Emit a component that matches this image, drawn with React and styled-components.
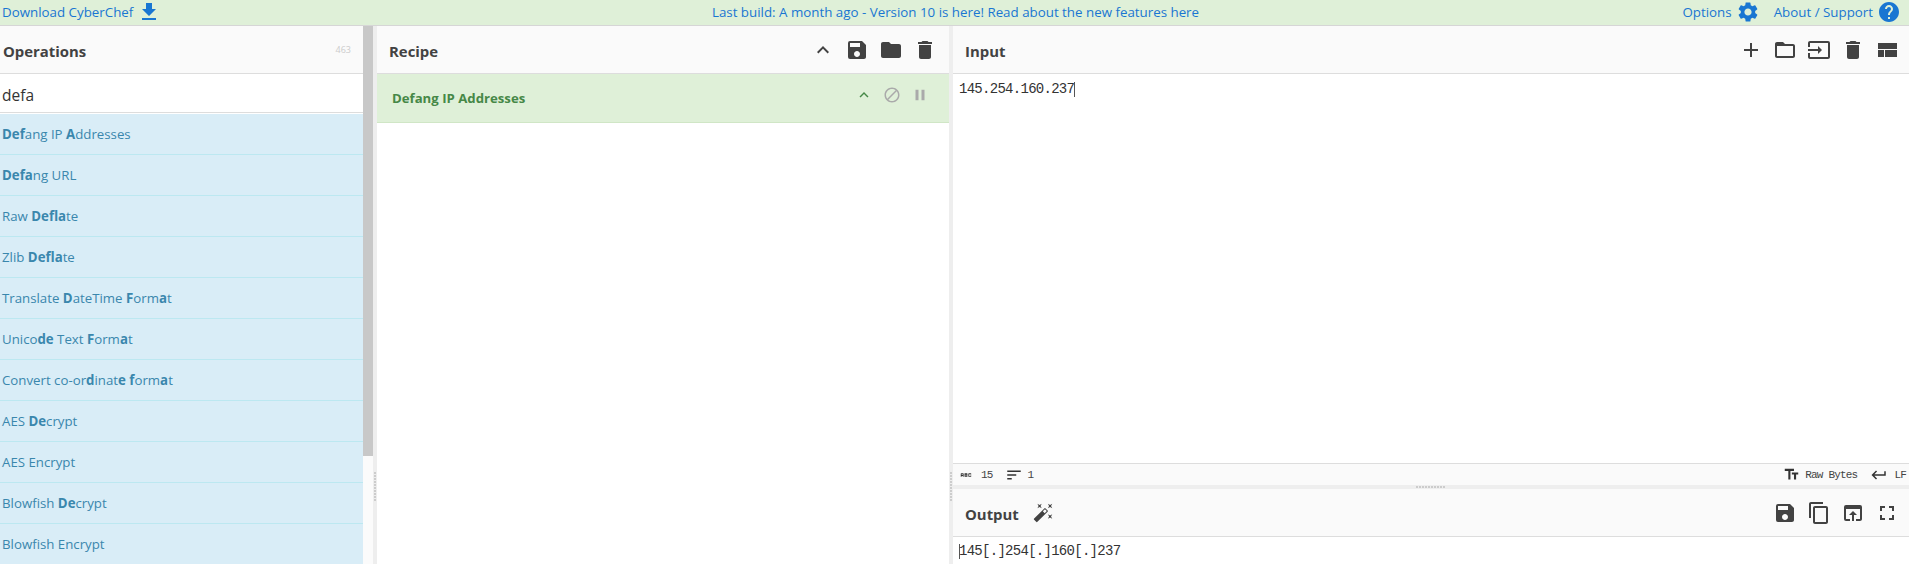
import React from 'react';
import styled, { createGlobalStyle } from 'styled-components';
import {
  MdFileDownload, MdSettings, MdHelp, MdKeyboardArrowUp, MdSave, MdFolder, MdDelete,
  MdAdd, MdFolderOpen, MdInput, MdContentCopy, MdOpenInBrowser,
  MdFullscreen, MdAutoFixHigh, MdBlock, MdPause, MdKeyboardReturn, MdTextFields, MdSort, MdAbc,
} from 'react-icons/md';

const sans = '"Open Sans", "Noto Sans", sans-serif';
const mono = '"Liberation Mono", monospace';

const GlobalStyle = createGlobalStyle`
  html, body { margin: 0; height: 100%; overflow: hidden; background: #fff; }
  * { box-sizing: border-box; }
`;

const Page = styled.div`
  height: 100vh;
  display: flex;
  flex-direction: column;
  font-family: ${sans};
  color: #333;
`;

const Banner = styled.div`
  height: 26px;
  flex: none;
  display: grid;
  grid-template-columns: 1fr auto 1fr;
  align-items: center;
  padding: 0 0 1px 2px;
  background: #dff0d8;
  border-bottom: 1px solid #d6d6d6;
  font-size: 13.33px;
  color: #1976d2;
`;

const BannerLink = styled.span`
  display: inline-flex;
  align-items: center;
  gap: 4px;
  svg { font-size: 24px; display: block; }
`;

const BannerRight = styled.div`
  display: flex;
  justify-content: flex-end;
  gap: 14px;
  padding-right: 8px;
`;

const Columns = styled.div`
  flex: 1;
  min-height: 0;
  display: grid;
  grid-template-columns: 373px 4px 572px 4px 1fr;
`;

const OpsColumn = styled.div`
  display: flex;
  min-height: 0;
  overflow: hidden;
`;

const OpsContent = styled.div`
  flex: 1;
  min-width: 0;
`;

const ScrollTrack = styled.div`
  width: 10px;
  flex: none;
  background: #fbfbfb;
`;

const ScrollThumb = styled.div`
  height: 430px;
  background: #c8c8c8;
`;

const Header = styled.div`
  height: 48px;
  flex: none;
  display: flex;
  align-items: center;
  justify-content: space-between;
  padding: 0 ${p => p.$right || 0}px 0 ${p => p.$left || 0}px;
  background: #fafafa;
  border-bottom: 1px solid #ddd;
`;

const Title = styled.h2`
  margin: 3px 0 0;
  font-size: 14.9px;
  font-weight: 700;
  color: #424242;
`;

const Count = styled.span`
  font-size: 9px;
  color: #ccc;
`;

const Search = styled.div`
  height: 39px;
  padding: 3px 0 0 2px;
  display: flex;
  align-items: center;
  font-size: 15.5px;
  color: #333;
  border-bottom: 1px solid #ddd;
`;

const OpList = styled.ul`
  list-style: none;
  margin: 1px 0 0;
  padding: 0;
`;

const OpItem = styled.li`
  height: 41px;
  display: flex;
  align-items: center;
  white-space: pre;
  padding-left: 2px;
  background: #d9edf7;
  border-bottom: 1px solid #bce8f1;
  font-size: 13.25px;
  color: #3a87ad;
  b { font-weight: 700; }
`;

const Gutter = styled.div`
  background: #eee;
  display: flex;
  align-items: center;
  justify-content: center;
`;

const GripDots = styled.span`
  width: 2px;
  height: 30px;
  margin-top: 384px;
  background: repeating-linear-gradient(#ccc 0 2px, transparent 2px 3px);
`;

const RecipeColumn = styled.div`
  display: flex;
  flex-direction: column;
  min-width: 0;
`;

const IconRow = styled.div`
  display: flex;
  align-items: center;
  gap: 10px;
  color: #424242;
  svg { display: block; }
`;

const Ingredient = styled.div`
  height: 49px;
  display: flex;
  align-items: center;
  justify-content: space-between;
  padding: 0 20px 0 15px;
  background: #dff0d8;
  border-bottom: 1px solid #d0e6c6;
  font-size: 13.2px;
  font-weight: 700;
  color: #468847;
`;

const IngredientIcons = styled.div`
  display: flex;
  align-items: center;
  gap: 10px;
  margin-bottom: 6px;
  color: #aaa;
  svg { display: block; }
`;

const InOutColumn = styled.div`
  display: flex;
  flex-direction: column;
  min-width: 0;
`;

const Editor = styled.div`
  flex: 1;
  padding: 7px 0 0 6px;
  font-family: ${mono};
  font-size: 14px;
  letter-spacing: -0.72px;
  line-height: 16px;
  color: #333;
`;

const Caret = styled.span`
  display: inline-block;
  width: 1px;
  height: 15px;
  margin-right: -1px;
  vertical-align: text-bottom;
  background: #555;
`;

const StatusBar = styled.div`
  height: 22px;
  flex: none;
  display: flex;
  align-items: center;
  justify-content: space-between;
  padding: 0 3px 0 6px;
  background: #fafafa;
  border-top: 1px solid #ddd;
  font-family: ${mono};
  font-size: 11px;
  letter-spacing: -0.8px;
  color: #444;
`;

const StatusGroup = styled.div`
  display: flex;
  align-items: center;
  gap: ${p => p.$gap}px;
`;

const StatusItem = styled.span`
  display: inline-flex;
  align-items: center;
  gap: ${p => p.$gap}px;
  svg { display: block; color: #333; }
`;

const PaneDivider = styled.div`
  height: 4px;
  flex: none;
  display: flex;
  justify-content: center;
  align-items: center;
  background: #eee;
`;

const PaneGrip = styled.span`
  width: 30px;
  height: 2px;
  background: repeating-linear-gradient(90deg, #ccc 0 2px, transparent 2px 3px);
`;

const OutputTitle = styled.div`
  display: flex;
  align-items: center;
  gap: 14px;
`;

const Output = styled.div`
  height: 27px;
  flex: none;
  padding: 7px 0 0 6px;
  font-family: ${mono};
  font-size: 14px;
  letter-spacing: -0.72px;
  line-height: 15px;
  color: #333;
`;

// old material view_compact, react-icons now ships the dotted one
const ViewLayoutIcon = () => (
  <svg width="24" height="24" viewBox="0 0 24 24" fill="currentColor">
    <path d="M3 19h6v-7H3v7zm7 0h12v-7H10v7zM3 5v6h19V5H3z" />
  </svg>
);

const ops = [
  [['Def', 1], ['ang IP '], ['A', 1], ['ddresses']],
  [['Defa', 1], ['ng URL']],
  [['Raw '], ['Defla', 1], ['te']],
  [['Zlib '], ['Defla', 1], ['te']],
  [['Translate '], ['D', 1], ['a'], ['te'], ['Time '], ['F', 1], ['orm'], ['a', 1], ['t']],
  [['Unico'], ['de', 1], [' Text '], ['F', 1], ['orm'], ['a', 1], ['t']],
  [['Convert co-or'], ['d', 1], ['inat'], ['e', 1], [' '], ['f', 1], ['orm'], ['a', 1], ['t']],
  [['AES '], ['De', 1], ['crypt']],
  [['AES Encrypt']],
  [['Blowfish '], ['De', 1], ['crypt']],
  [['Blowfish Encrypt']],
];

const App = () => (
  <Page>
    <GlobalStyle />
    <Banner>
      <div><BannerLink>Download CyberChef <MdFileDownload /></BannerLink></div>
      <span>Last build: A month ago - Version 10 is here! Read about the new features here</span>
      <BannerRight>
        <BannerLink>Options <MdSettings /></BannerLink>
        <BannerLink>About / Support <MdHelp /></BannerLink>
      </BannerRight>
    </Banner>
    <Columns>
      <OpsColumn>
        <OpsContent>
          <Header $left={3} $right={12}>
            <Title>Operations</Title>
            <Count>463</Count>
          </Header>
          <Search>defa</Search>
          <OpList>
            {ops.map((parts, i) => (
              <OpItem key={i}>
                {parts.map(([text, bold], j) => (bold ? <b key={j}>{text}</b> : <span key={j}>{text}</span>))}
              </OpItem>
            ))}
          </OpList>
        </OpsContent>
        <ScrollTrack><ScrollThumb /></ScrollTrack>
      </OpsColumn>
      <Gutter><GripDots /></Gutter>
      <RecipeColumn>
        <Header $left={12} $right={12}>
          <Title>Recipe</Title>
          <IconRow>
            <MdKeyboardArrowUp size={24} />
            <MdSave size={24} />
            <MdFolder size={24} />
            <MdDelete size={24} />
          </IconRow>
        </Header>
        <Ingredient>
          Defang IP Addresses
          <IngredientIcons>
            <MdKeyboardArrowUp size={18} color="#468847" />
            <MdBlock size={18} />
            <MdPause size={18} />
          </IngredientIcons>
        </Ingredient>
      </RecipeColumn>
      <Gutter><GripDots /></Gutter>
      <InOutColumn>
        <Header $left={12} $right={10}>
          <Title>Input</Title>
          <IconRow>
            <MdAdd size={24} />
            <MdFolderOpen size={24} />
            <MdInput size={24} />
            <MdDelete size={24} />
            <ViewLayoutIcon />
          </IconRow>
        </Header>
        <Editor>145.254.160.237<Caret /></Editor>
        <StatusBar>
          <StatusGroup $gap={12}>
            <StatusItem $gap={8}><MdAbc size={14} />15</StatusItem>
            <StatusItem $gap={5}><MdSort size={18} />1</StatusItem>
          </StatusGroup>
          <StatusGroup $gap={13}>
            <StatusItem $gap={5}><MdTextFields size={17} />Raw Bytes</StatusItem>
            <StatusItem $gap={6}><MdKeyboardReturn size={18} />LF</StatusItem>
          </StatusGroup>
        </StatusBar>
        <PaneDivider><PaneGrip /></PaneDivider>
        <Header $left={12} $right={10}>
          <OutputTitle>
            <Title>Output</Title>
            <MdAutoFixHigh size={21} color="#424242" />
          </OutputTitle>
          <IconRow>
            <MdSave size={24} />
            <MdContentCopy size={24} />
            <MdOpenInBrowser size={24} />
            <MdFullscreen size={24} />
          </IconRow>
        </Header>
        <Output><Caret />145[.]254[.]160[.]237</Output>
      </InOutColumn>
    </Columns>
  </Page>
);

export default App;
